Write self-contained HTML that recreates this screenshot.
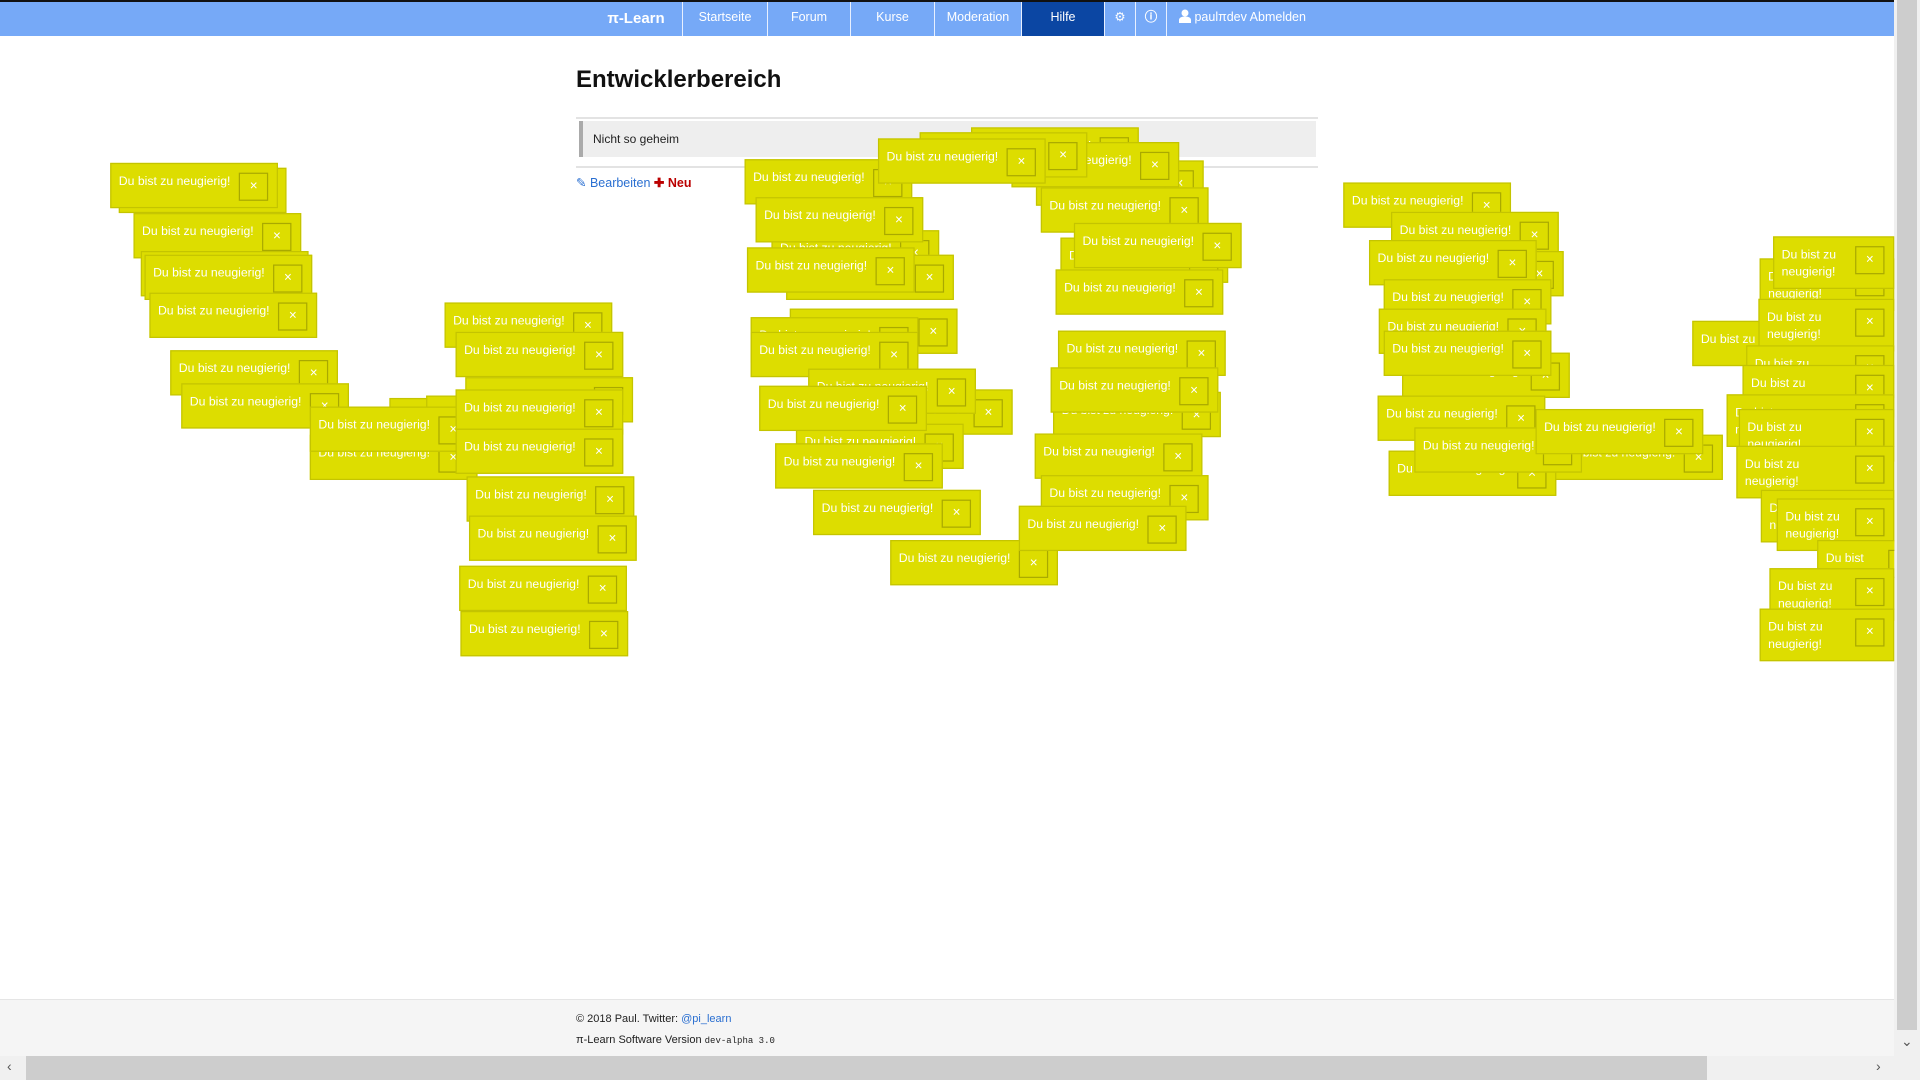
<!DOCTYPE html>
<html><head><meta charset="utf-8">
<style>
*{box-sizing:border-box}
body{margin:0;width:1920px;height:1080px;overflow:hidden;background:#fff;font-family:"Liberation Sans",sans-serif;position:relative}
.nav{position:absolute;left:0;top:0;width:1894px;height:36px;background:#76a9f7;border-top:2px solid #111}
.nav div{position:absolute;top:0;height:34px;color:#fff;font-size:12.5px;line-height:31px;text-align:center;border-left:1px solid #e8f0ff}
.brand{font-size:15px!important;font-weight:bold;border-left:none!important;line-height:34px!important}
.act{background:#0b46a3}
h1{position:absolute;left:576px;top:66px;margin:0;font-size:24px;font-weight:bold;color:#111}
.hr{position:absolute;left:576px;width:742px;height:2px;background:#e3e3e3}
.box{position:absolute;left:579px;top:121px;width:737px;height:36px;background:#eee;border-left:4px solid #aaa;font-size:12px;line-height:36px;padding-left:10px;color:#222}
.links{position:absolute;left:576px;top:175px;font-size:12.5px}
.foot{position:absolute;left:0;top:999px;width:1894px;height:57px;background:#f5f5f5;border-top:1px solid #e5e5e5;font-size:11px;color:#222}
.vs{position:absolute;right:0;top:0;width:26px;height:1056px;background:#f0f0f0}
.vs .th{position:absolute;left:3px;top:0;width:20px;height:1030px;background:#cdcdcd}
.hs{position:absolute;left:0;top:1056px;width:1920px;height:24px;background:#f0f0f0}
.hs .th{position:absolute;left:26px;top:0;width:1681px;height:24px;background:#cdcdcd}
.ar{position:absolute;font-size:14px;color:#555}
.layer{position:absolute;left:0;top:0;width:1547px;height:860px;transform:scale(1.2245);transform-origin:0 0;overflow:hidden}
.t{position:absolute;background:#dddd00;border:1px solid #c4c400;padding:4px 7px 5px 6px;display:flex;align-items:flex-start;color:#fff;font-size:10px;line-height:14px}
.t span{padding-top:4px}
.t b{flex-shrink:0;width:24px;height:23px;margin:3px 0 0 7px;border:1px solid #a9a900;font-weight:normal;font-size:11px;text-align:center;line-height:21px}
</style></head><body>
<div class="nav">
<div class="brand" style="left:596px;width:80px">π-Learn</div>
<div style="left:682px;width:85px">Startseite</div>
<div style="left:767px;width:83px">Forum</div>
<div style="left:850px;width:84px">Kurse</div>
<div style="left:934px;width:87px">Moderation</div>
<div class="act" style="left:1021px;width:83px">Hilfe</div>
<div style="left:1104px;width:31px">⚙</div>
<div style="left:1135px;width:31px;font-weight:bold">ⓘ</div>
<div style="left:1166px;width:154px;text-align:left;padding-left:12px"><svg width="12" height="14" viewBox="0 0 12 14" style="vertical-align:-2px"><circle cx="6" cy="4" r="3.5" fill="#fff"/><path d="M0 14v-3c0-2 2-3.5 6-3.5s6 1.5 6 3.5v3z" fill="#fff"/></svg> paulπdev Abmelden</div>
</div>
<h1>Entwicklerbereich</h1>
<div class="hr" style="top:117px"></div>
<div class="box">Nicht so geheim</div>
<div class="hr" style="top:166px"></div>
<div class="links"><span style="color:#2a6fd1">✎ Bearbeiten</span> <span style="color:#b00;font-weight:bold">✚ Neu</span></div>
<div class="foot"><div style="position:absolute;left:576px;top:13px">© 2018 Paul. Twitter: <span style="color:#2a6fd1">@pi_learn</span></div><div style="position:absolute;left:576px;top:34px">π-Learn Software Version <code style="font-family:'Liberation Mono',monospace;font-size:9px">dev-alpha 3.0</code></div></div>
<div class="vs"><div class="th"></div><div class="ar" style="left:7px;top:1033px">⌄</div></div>
<div class="hs"><div class="th"></div><div class="ar" style="left:7px;top:2px">‹</div><div class="ar" style="left:1876px;top:2px">›</div></div>
<div class="layer">
<div class="t" style="left:97px;top:137px"><span>Du bist zu neugierig!</span><b>×</b></div>
<div class="t" style="left:90px;top:133px"><span>Du bist zu neugierig!</span><b>×</b></div>
<div class="t" style="left:109px;top:174px"><span>Du bist zu neugierig!</span><b>×</b></div>
<div class="t" style="left:115px;top:205px"><span>Du bist zu neugierig!</span><b>×</b></div>
<div class="t" style="left:118px;top:208px"><span>Du bist zu neugierig!</span><b>×</b></div>
<div class="t" style="left:122px;top:239px"><span>Du bist zu neugierig!</span><b>×</b></div>
<div class="t" style="left:139px;top:286px"><span>Du bist zu neugierig!</span><b>×</b></div>
<div class="t" style="left:148px;top:313px"><span>Du bist zu neugierig!</span><b>×</b></div>
<div class="t" style="left:318px;top:325px"><span>Du bist zu neugierig!</span><b>×</b></div>
<div class="t" style="left:348px;top:323px"><span>Du bist zu neugierig!</span><b>×</b></div>
<div class="t" style="left:253px;top:355px"><span>Du bist zu neugierig!</span><b>×</b></div>
<div class="t" style="left:253px;top:332px"><span>Du bist zu neugierig!</span><b>×</b></div>
<div class="t" style="left:363px;top:247px"><span>Du bist zu neugierig!</span><b>×</b></div>
<div class="t" style="left:380px;top:308px"><span>Du bist zu neugierig!</span><b>×</b></div>
<div class="t" style="left:372px;top:271px"><span>Du bist zu neugierig!</span><b>×</b></div>
<div class="t" style="left:372px;top:318px"><span>Du bist zu neugierig!</span><b>×</b></div>
<div class="t" style="left:372px;top:350px"><span>Du bist zu neugierig!</span><b>×</b></div>
<div class="t" style="left:381px;top:389px"><span>Du bist zu neugierig!</span><b>×</b></div>
<div class="t" style="left:383px;top:421px"><span>Du bist zu neugierig!</span><b>×</b></div>
<div class="t" style="left:375px;top:462px"><span>Du bist zu neugierig!</span><b>×</b></div>
<div class="t" style="left:376px;top:499px"><span>Du bist zu neugierig!</span><b>×</b></div>

<div class="t" style="left:608px;top:130px"><span>Du bist zu neugierig!</span><b>×</b></div>
<div class="t" style="left:630px;top:188px"><span>Du bist zu neugierig!</span><b>×</b></div>
<div class="t" style="left:617px;top:161px"><span>Du bist zu neugierig!</span><b>×</b></div>
<div class="t" style="left:642px;top:208px"><span>Du bist zu neugierig!</span><b>×</b></div>
<div class="t" style="left:610px;top:202px"><span>Du bist zu neugierig!</span><b>×</b></div>
<div class="t" style="left:645px;top:252px"><span>Du bist zu neugierig!</span><b>×</b></div>
<div class="t" style="left:613px;top:259px"><span>Du bist zu neugierig!</span><b>×</b></div>
<div class="t" style="left:613px;top:271px"><span>Du bist zu neugierig!</span><b>×</b></div>
<div class="t" style="left:690px;top:318px"><span>Du bist zu neugierig!</span><b>×</b></div>
<div class="t" style="left:660px;top:301px"><span>Du bist zu neugierig!</span><b>×</b></div>
<div class="t" style="left:650px;top:346px"><span>Du bist zu neugierig!</span><b>×</b></div>
<div class="t" style="left:620px;top:315px"><span>Du bist zu neugierig!</span><b>×</b></div>
<div class="t" style="left:633px;top:362px"><span>Du bist zu neugierig!</span><b>×</b></div>
<div class="t" style="left:664px;top:400px"><span>Du bist zu neugierig!</span><b>×</b></div>
<div class="t" style="left:727px;top:441px"><span>Du bist zu neugierig!</span><b>×</b></div>
<div class="t" style="left:793px;top:104px"><span>Du bist zu neugierig!</span><b>×</b></div>
<div class="t" style="left:846px;top:131px"><span>Du bist zu neugierig!</span><b>×</b></div>
<div class="t" style="left:850px;top:153px"><span>Du bist zu neugierig!</span><b>×</b></div>
<div class="t" style="left:826px;top:116px"><span>Du bist zu neugierig!</span><b>×</b></div>
<div class="t" style="left:751px;top:108px"><span>Du bist zu neugierig!</span><b>×</b></div>
<div class="t" style="left:717px;top:113px"><span>Du bist zu neugierig!</span><b>×</b></div>
<div class="t" style="left:866px;top:194px"><span>Du bist zu neugierig!</span><b>×</b></div>
<div class="t" style="left:877px;top:182px"><span>Du bist zu neugierig!</span><b>×</b></div>
<div class="t" style="left:862px;top:220px"><span>Du bist zu neugierig!</span><b>×</b></div>
<div class="t" style="left:864px;top:270px"><span>Du bist zu neugierig!</span><b>×</b></div>
<div class="t" style="left:860px;top:320px"><span>Du bist zu neugierig!</span><b>×</b></div>
<div class="t" style="left:858px;top:300px"><span>Du bist zu neugierig!</span><b>×</b></div>
<div class="t" style="left:845px;top:354px"><span>Du bist zu neugierig!</span><b>×</b></div>
<div class="t" style="left:850px;top:388px"><span>Du bist zu neugierig!</span><b>×</b></div>
<div class="t" style="left:832px;top:413px"><span>Du bist zu neugierig!</span><b>×</b></div>

<div class="t" style="left:1097px;top:149px"><span>Du bist zu neugierig!</span><b>×</b></div>
<div class="t" style="left:1136px;top:173px"><span>Du bist zu neugierig!</span><b>×</b></div>
<div class="t" style="left:1140px;top:205px"><span>Du bist zu neugierig!</span><b>×</b></div>
<div class="t" style="left:1118px;top:196px"><span>Du bist zu neugierig!</span><b>×</b></div>
<div class="t" style="left:1130px;top:228px"><span>Du bist zu neugierig!</span><b>×</b></div>
<div class="t" style="left:1126px;top:252px"><span>Du bist zu neugierig!</span><b>×</b></div>
<div class="t" style="left:1145px;top:288px"><span>Du bist zu neugierig!</span><b>×</b></div>
<div class="t" style="left:1130px;top:270px"><span>Du bist zu neugierig!</span><b>×</b></div>
<div class="t" style="left:1125px;top:323px"><span>Du bist zu neugierig!</span><b>×</b></div>
<div class="t" style="left:1134px;top:368px"><span>Du bist zu neugierig!</span><b>×</b></div>
<div class="t" style="left:1270px;top:355px"><span>Du bist zu neugierig!</span><b>×</b></div>
<div class="t" style="left:1155px;top:349px"><span>Du bist zu neugierig!</span><b>×</b></div>
<div class="t" style="left:1254px;top:334px"><span>Du bist zu neugierig!</span><b>×</b></div>
<div class="t" style="left:1382px;top:262px"><span>Du bist zu neugierig!</span><b>×</b></div>
<div class="t" style="left:1437px;top:211px"><span>Du bist zu neugierig!</span><b>×</b></div>
<div class="t" style="left:1448px;top:193px"><span>Du bist zu neugierig!</span><b>×</b></div>
<div class="t" style="left:1436px;top:244px"><span>Du bist zu neugierig!</span><b>×</b></div>
<div class="t" style="left:1426px;top:282px"><span>Du bist zu neugierig!</span><b>×</b></div>
<div class="t" style="left:1423px;top:298px"><span>Du bist zu neugierig!</span><b>×</b></div>
<div class="t" style="left:1410px;top:322px"><span>Du bist zu neugierig!</span><b>×</b></div>
<div class="t" style="left:1420px;top:334px"><span>Du bist zu neugierig!</span><b>×</b></div>
<div class="t" style="left:1418px;top:364px"><span>Du bist zu neugierig!</span><b>×</b></div>
<div class="t" style="left:1438px;top:400px"><span>Du bist zu neugierig!</span><b>×</b></div>
<div class="t" style="left:1451px;top:407px"><span>Du bist zu neugierig!</span><b>×</b></div>
<div class="t" style="left:1484px;top:441px"><span>Du bist zu neugierig!</span><b>×</b></div>
<div class="t" style="left:1445px;top:464px"><span>Du bist zu neugierig!</span><b>×</b></div>
<div class="t" style="left:1437px;top:497px"><span>Du bist zu neugierig!</span><b>×</b></div>
</div>
</body></html>
